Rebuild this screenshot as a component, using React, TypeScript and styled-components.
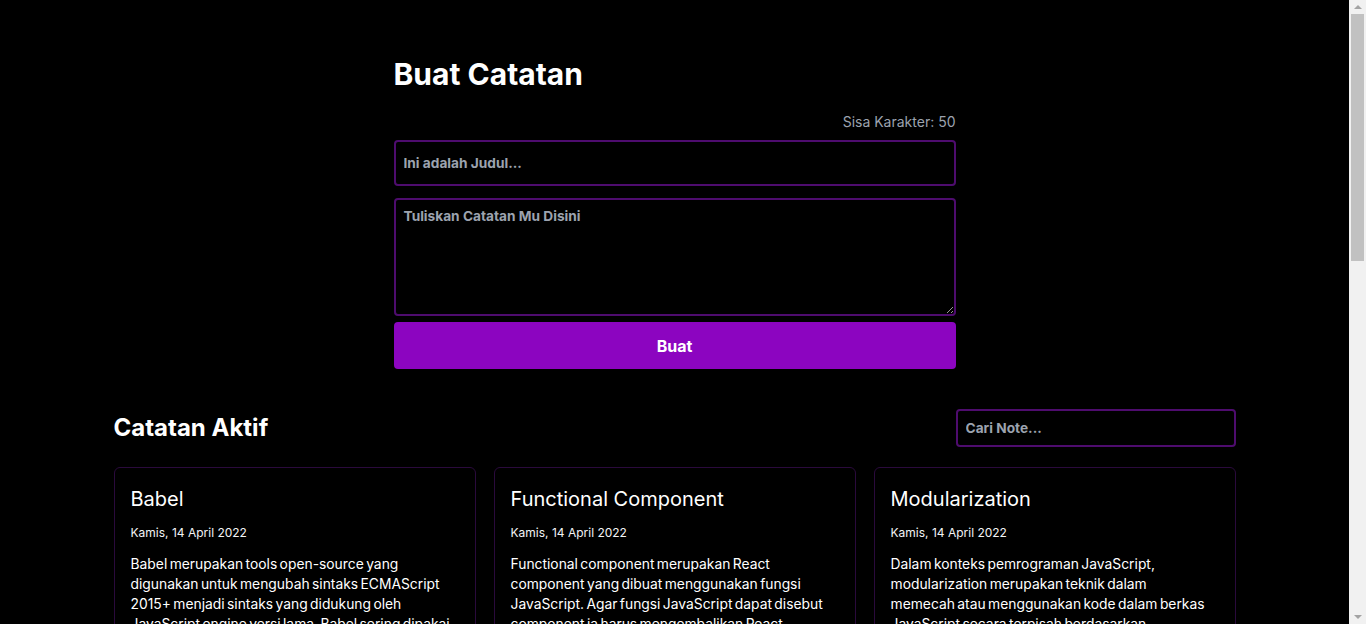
import React, { useEffect, useRef, useState } from "react";
import styled, { createGlobalStyle } from "styled-components";

const Global = createGlobalStyle`
  html, body { margin: 0; padding: 0; background: #000; height: 100%; overflow: hidden; }
  body { font-family: Inter, "Noto Sans", sans-serif; color: #fff; }
  #root { height: 100%; }
  * { box-sizing: border-box; }
`;

const Shell = styled.div`
  display: flex;
  height: 100vh;
  background: #000;
`;

const Main = styled.main`
  flex: 1;
  min-width: 0;
  height: 100%;
  overflow-y: auto;
  scrollbar-width: none;
  &::-webkit-scrollbar { display: none; }
`;

const Track = styled.div`
  width: 17px;
  height: 100%;
  background: #f1f1f1;
  display: flex;
  flex-direction: column;
`;

const ArrowBtn = styled.div<{ $down?: boolean }>`
  height: 14px;
  flex: none;
  display: flex;
  align-items: center;
  justify-content: center;
  &::before {
    content: "";
    width: 0;
    height: 0;
    border-left: 4px solid transparent;
    border-right: 4px solid transparent;
    ${(p) =>
      p.$down ? "border-top: 4px solid #a3a3a3;" : "border-bottom: 4px solid #a3a3a3;"}
  }
`;

const Rail = styled.div`
  flex: 1;
  position: relative;
`;

const Thumb = styled.div`
  position: absolute;
  left: 2px;
  right: 2px;
  background: #c1c1c1;
`;

const Inner = styled.div`
  padding: 56px 0 300px;
`;

const FormSection = styled.section`
  width: 562px;
  margin: 0 auto;
  display: flex;
  flex-direction: column;
`;

const Title = styled.h1`
  margin: 0 0 20px;
  font-size: 30px;
  font-weight: 700;
  line-height: 36px;
`;

const Counter = styled.p`
  margin: 0 0 8px;
  text-align: right;
  font-size: 14px;
  line-height: 20px;
  color: #9ca3af;
`;

const fieldBase = `
  width: 100%;
  background: #000;
  color: #fff;
  border: 2px solid #4e0c6e;
  border-radius: 4px;
  font-family: Inter, "Noto Sans", sans-serif;
  font-size: 13.7px;
  font-weight: 700;
  outline: none;
  &::placeholder { color: #9ca3af; opacity: 1; }
`;

const TitleInput = styled.input`
  ${fieldBase}
  height: 46px;
  padding: 0 8px;
  margin-bottom: 12px;
`;

const BodyInput = styled.textarea`
  ${fieldBase}
  height: 118px;
  padding: 8px 8px;
  resize: vertical;
  display: block;
  margin-bottom: 6px;
`;

const SubmitButton = styled.button`
  height: 47px;
  border: none;
  border-radius: 4px;
  background: #8c05c0;
  color: #fff;
  font-family: Inter, "Noto Sans", sans-serif;
  font-size: 16px;
  font-weight: 700;
  cursor: pointer;
`;

const NotesSection = styled.section`
  width: 1122px;
  margin: 40px auto 0;
`;

const SectionHeader = styled.div`
  display: flex;
  justify-content: space-between;
  align-items: center;
  margin-bottom: 20px;
`;

const SectionTitle = styled.h2`
  margin: 0;
  font-size: 24px;
  font-weight: 700;
  line-height: 32px;
`;

const SearchInput = styled.input`
  ${fieldBase}
  width: 280px;
  height: 38px;
  padding: 0 8px;
`;

const Grid = styled.div`
  display: grid;
  grid-template-columns: repeat(3, 1fr);
  gap: 18px;
`;

const Card = styled.article`
  border: 1px solid #2a0a3c;
  border-radius: 6px;
  padding: 16px 16px 16px 16px;
  display: flex;
  flex-direction: column;
`;

const CardTitle = styled.h3`
  margin: 0 0 10px;
  font-size: 20px;
  font-weight: 400;
  line-height: 30px;
`;

const CardDate = styled.p`
  margin: 0 0 12px;
  font-size: 12px;
  line-height: 18px;
  color: #f3f4f6;
`;

const CardBody = styled.p`
  margin: 0 0 16px;
  padding-right: 8px;
  font-size: 13.85px;
  word-spacing: -1.5px;
  line-height: 20px;
  flex: 1;
`;

const Actions = styled.div`
  display: flex;
  gap: 8px;
`;

const ActionButton = styled.button<{ $danger?: boolean }>`
  flex: 1;
  height: 36px;
  border: none;
  border-radius: 4px;
  background: ${(p) => (p.$danger ? "#b91c1c" : "#8c05c0")};
  color: #fff;
  font-family: Inter, "Noto Sans", sans-serif;
  font-size: 14px;
  font-weight: 700;
`;

const Empty = styled.p`
  margin: 0;
  padding: 40px 0;
  text-align: center;
  color: #9ca3af;
  font-size: 14px;
`;

const notes = [
  {
    title: "Babel",
    body: "Babel merupakan tools open-source yang digunakan untuk mengubah sintaks ECMAScript 2015+ menjadi sintaks yang didukung oleh JavaScript engine versi lama. Babel sering dipakai ketika kita menggunakan sintaks terbaru termasuk sintaks JSX.",
  },
  {
    title: "Functional Component",
    body: "Functional component merupakan React component yang dibuat menggunakan fungsi JavaScript. Agar fungsi JavaScript dapat disebut component ia harus mengembalikan React element dan dipanggil layaknya React component.",
  },
  {
    title: "Modularization",
    body: "Dalam konteks pemrograman JavaScript, modularization merupakan teknik dalam memecah atau menggunakan kode dalam berkas JavaScript secara terpisah berdasarkan tanggung jawabnya masing-masing.",
  },
  {
    title: "Lifecycle",
    body: "Dalam konteks React component, lifecycle merupakan kumpulan method yang menjadi siklus hidup mulai dari component dibuat (constructor), dicetak (render), pasca-cetak (componentDidMount), dan sebagainya.",
  },
  {
    title: "ESM",
    body: "ESM (ECMAScript Module) merupakan format modularisasi standar JavaScript.",
  },
  {
    title: "Module Bundler",
    body: "Dalam konteks pemrograman JavaScript, module bundler merupakan tools yang digunakan untuk menggabungkan seluruh modul JavaScript yang digunakan oleh aplikasi menjadi satu berkas.",
  },
];

function useScrollThumb(ref: React.RefObject<HTMLElement | null>) {
  const [thumb, setThumb] = useState({ top: 0, height: 0.4 });
  useEffect(() => {
    const el = ref.current;
    if (!el) return;
    const update = () => {
      const ratio = Math.min(1, el.clientHeight / el.scrollHeight);
      const maxScroll = el.scrollHeight - el.clientHeight;
      const pos = maxScroll > 0 ? el.scrollTop / maxScroll : 0;
      setThumb({ height: ratio, top: pos * (1 - ratio) });
    };
    update();
    el.addEventListener("scroll", update);
    window.addEventListener("resize", update);
    return () => {
      el.removeEventListener("scroll", update);
      window.removeEventListener("resize", update);
    };
  }, [ref]);
  return thumb;
}

export default function App() {
  const [title, setTitle] = useState("");
  const mainRef = useRef<HTMLElement | null>(null);
  const thumb = useScrollThumb(mainRef);
  return (
    <>
      <Global />
      <Shell>
        <Main ref={mainRef}>
          <Inner>
            <FormSection>
              <Title>Buat Catatan</Title>
              <Counter>Sisa Karakter: {50 - title.length}</Counter>
              <TitleInput
                placeholder="Ini adalah Judul..."
                value={title}
                onChange={(e) => setTitle(e.target.value.slice(0, 50))}
              />
              <BodyInput placeholder="Tuliskan Catatan Mu Disini" />
              <SubmitButton>Buat</SubmitButton>
            </FormSection>
            <NotesSection>
              <SectionHeader>
                <SectionTitle>Catatan Aktif</SectionTitle>
                <SearchInput placeholder="Cari Note..." />
              </SectionHeader>
              <Grid>
                {notes.map((n) => (
                  <Card key={n.title}>
                    <CardTitle>{n.title}</CardTitle>
                    <CardDate>Kamis, 14 April 2022</CardDate>
                    <CardBody>{n.body}</CardBody>
                    <Actions>
                      <ActionButton $danger>Delete</ActionButton>
                      <ActionButton>Arsipkan</ActionButton>
                    </Actions>
                  </Card>
                ))}
              </Grid>
            </NotesSection>
            <NotesSection>
              <SectionHeader>
                <SectionTitle>Arsip</SectionTitle>
              </SectionHeader>
              <Empty>Tidak ada catatan</Empty>
            </NotesSection>
          </Inner>
        </Main>
        <Track aria-hidden>
          <ArrowBtn />
          <Rail>
            <Thumb style={{ top: `${thumb.top * 100}%`, height: `${thumb.height * 100}%` }} />
          </Rail>
          <ArrowBtn $down />
        </Track>
      </Shell>
    </>
  );
}
